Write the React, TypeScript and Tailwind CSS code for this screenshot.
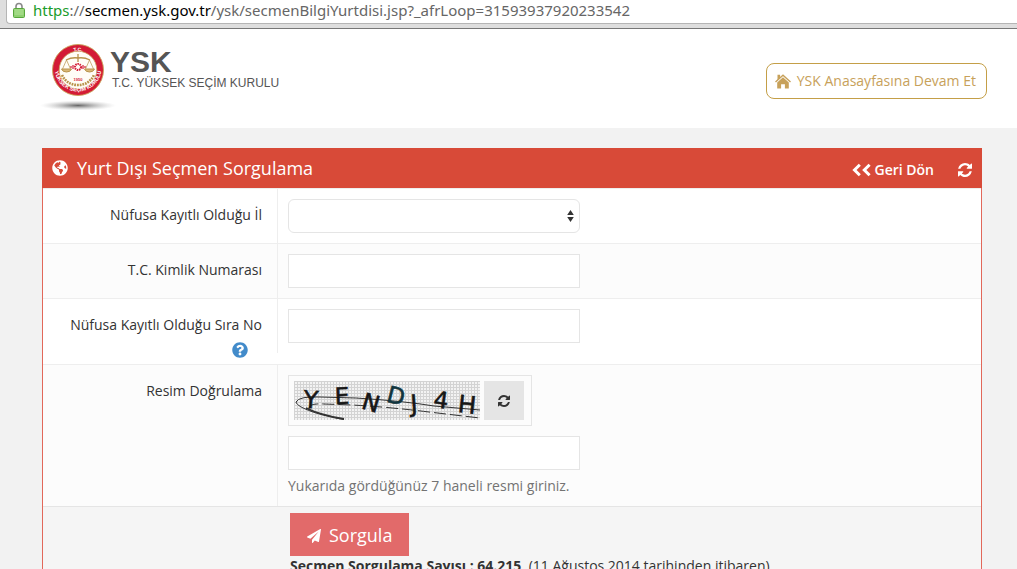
import type { ReactNode } from "react";
import { FaGlobeAmericas, FaQuestionCircle } from "react-icons/fa";

function RefreshIcon({ className }: { className: string }) {
  return (
    <svg viewBox="0 0 1536 1536" fill="currentColor" className={className} aria-hidden="true">
      <path d="M1511 928q0 5-1 7-64 268-268 434.500t-478 166.500q-146 0-282.500-55t-243.500-157l-129 129q-19 19-45 19t-45-19-19-45v-448q0-26 19-45t45-19h448q26 0 45 19t19 45-19 45l-137 137q71 66 161 102t187 36q134 0 250-65t186-179q11-17 53-117 8-23 30-23h192q13 0 22.500 9.500t9.500 22.500zm25-800v448q0 26-19 45t-45 19h-448q-26 0-45-19t-19-45 19-45l138-138q-148-137-349-137-134 0-250 65t-186 179q-11 17-53 117-8 23-30 23h-199q-13 0-22.500-9.500t-9.500-22.500v-7q65-268 270-434.500t480-166.500q146 0 284 55.500t245 156.500l130-129q19-19 45-19t45 19 19 45z" />
    </svg>
  );
}

function PlaneIcon() {
  return (
    <svg viewBox="0 0 1792 1792" fill="currentColor" className="mt-0.5 size-3.5" aria-hidden="true">
      <path d="M1764 11q33 24 27 64l-256 1536q-5 29-32 45-14 8-31 8-11 0-24-5l-453-185-242 295q-18 23-49 23-13 0-22-4-19-7-30.500-23.500t-11.500-36.500v-349l864-1059-1069 925-395-162q-37-14-40-55-2-40 32-59l1664-960q15-9 32-9 20 0 36 11z" />
    </svg>
  );
}

function DoubleChevronIcon() {
  return (
    <svg viewBox="0 0 20 14" className="h-3.5 w-5" fill="none" stroke="currentColor" strokeWidth="3" aria-hidden="true">
      <path d="M8.800 1.800L3.500 7l5.300 5.200M18.600 1.800L13.300 7l5.300 5.200" />
    </svg>
  );
}

function HomeIcon() {
  return (
    <svg viewBox="0 0 16 15" className="h-[15px] w-4" aria-hidden="true">
      <path d="M2.500 0.800h2.600v3l-2.600 2.200z" fill="currentColor" />
      <path d="M0.500 8L8 1.200 15.500 8" fill="none" stroke="currentColor" strokeWidth="1.400" />
      <path d="M8 3.200l5.800 5.200V14.500H9.900V10.200H6.100V14.500H2.200V8.400z" fill="currentColor" />
    </svg>
  );
}

function LockIcon() {
  return (
    <svg viewBox="0 0 12 16" className="h-4 w-3 shrink-0" aria-hidden="true">
      <path d="M3 8V4.500a3 3 0 0 1 6 0V8" fill="none" stroke="#8a8a8a" strokeWidth="1.600" />
      <rect x="0.500" y="6.500" width="11" height="9" rx="1" fill="#8fd070" stroke="#57a63c" />
      <path d="M1.500 8h9M1.500 10h9M1.500 12h9" stroke="#bce8a5" strokeWidth="0.800" />
    </svg>
  );
}

function Emblem() {
  return (
    <svg viewBox="0 0 80 72" className="h-[72px] w-20 shrink-0" aria-hidden="true">
      <defs>
        <radialGradient id="shade">
          <stop offset="0" stopColor="#555" stopOpacity="0.900" />
          <stop offset="0.500" stopColor="#888" stopOpacity="0.450" />
          <stop offset="1" stopColor="#bbb" stopOpacity="0" />
        </radialGradient>
        <path id="lowerArc" d="M16.500 25a23.500 23.500 0 0 0 47 0" />
        <path id="upperArc" d="M20 28a20 20 0 0 1 40 0" />
      </defs>
      <ellipse cx="40" cy="62.500" rx="38" ry="5" fill="url(#shade)" />
      <circle cx="40" cy="27" r="25.500" fill="#d31b35" stroke="#c9a35a" strokeWidth="0.900" />
      <circle cx="40" cy="27" r="18.800" fill="#fffdf6" stroke="#c9a35a" strokeWidth="0.800" />
      <g fill="#fff" fontFamily="Liberation Sans, sans-serif" fontWeight="700">
        <text fontSize="5" textAnchor="middle">
          <textPath href="#upperArc" startOffset="50%">T.C.</textPath>
        </text>
        <text fontSize="5.500" textAnchor="middle">
          <textPath href="#lowerArc" startOffset="50%">YÜKSEK SEÇİM KURULU</textPath>
        </text>
      </g>
      <g fill="none" stroke="#b8924a" strokeWidth="1">
        <path d="M28 17q6-3 12-2q6-1 12 2M40 11v8" strokeWidth="1.300" />
        <path d="M28.500 17l-4 9M28.500 17l4 9M51.500 17l-4 9M51.500 17l4 9" strokeWidth="0.700" />
        <path d="M23.500 26h10q-1 3-5 3t-5-3zM46.500 26h10q-1 3-5 3t-5-3z" fill="#d8b877" />
        <path d="M24 32q5 10 16 10q11 0 16-10" strokeWidth="2.600" strokeDasharray="1.800 0.900" />
      </g>
      <circle cx="40" cy="24" r="3" fill="none" stroke="#d31b35" strokeWidth="2" strokeDasharray="1.500 0.700" />
      <path d="M35 22v4M45 22v4M33 23v2M47 23v2" stroke="#d31b35" strokeWidth="1.200" />
      <text x="40" y="37.500" fontSize="4" fontWeight="700" textAnchor="middle" fill="#d31b35" fontFamily="Liberation Sans, sans-serif">1950</text>
    </svg>
  );
}

const captchaLetters = [
  { char: "Y", x: 17, y: 19, angle: 4, size: 24, color: "#161616" },
  { char: "E", x: 48, y: 15, angle: -2, size: 23, color: "#161616" },
  { char: "N", x: 77, y: 22, angle: 16, size: 23, color: "#161616" },
  { char: "D", x: 102, y: 15, angle: 14, size: 23, color: "#10343d" },
  { char: "J", x: 120, y: 23, angle: -4, size: 24, color: "#161616" },
  { char: "4", x: 147, y: 19, angle: 8, size: 23, color: "#161616" },
  { char: "H", x: 173, y: 24, angle: 6, size: 24, color: "#161616" },
];

function Captcha() {
  return (
    <svg viewBox="0 0 186 39" className="h-[39px] w-[186px]" role="img" aria-label="Resim Doğrulama">
      <defs>
        <pattern id="mesh" width="3" height="3" patternUnits="userSpaceOnUse">
          <rect width="3" height="3" fill="#f3f3f3" />
          <path d="M0.500 0v3M0 0.500h3" stroke="#d3d3d3" />
        </pattern>
      </defs>
      <rect width="186" height="39" fill="url(#mesh)" />
      <g fill="none" stroke="#333">
        <path d="M50 38.500C28 35 3 27 2 21Q5 15 26 16L62 17Q110 20 140 25L186 29" strokeWidth="1" />
        <path d="M15 28Q14 22 30 23L58 24Q95 26 135 31L186 37" strokeWidth="1" strokeDasharray="12 4" />
        <path d="M12 27Q26 34 50 38" strokeWidth="1.800" />
      </g>
      {captchaLetters.map((l) => (
        <text
          key={l.x}
          x={l.x}
          y={l.y}
          transform={`rotate(${l.angle} ${l.x} ${l.y})`}
          fontSize={l.size}
          fill={l.color}
          stroke={l.color}
          strokeWidth="0.600"
          textAnchor="middle"
          dominantBaseline="central"
          fontFamily="DejaVu Sans, sans-serif"
        >
          {l.char}
        </text>
      ))}
    </svg>
  );
}

const inputClass = "block h-[34px] w-[292px] max-w-full border border-[#e5e5e5] bg-white px-3 outline-none";

type RowProps = { id: string; label: string; shaded?: boolean; help?: boolean; children: ReactNode };

function FormRow({ id, label, shaded, help, children }: RowProps) {
  return (
    <div className={`flex items-start border-t border-[#eeeeee] ${shaded ? "bg-[#fcfcfc]" : "bg-white"}`}>
      <div className="w-[234px] shrink-0 pt-4 pr-[15px] text-right">
        <label htmlFor={id} className="block">{label}</label>
        {help && (
          <button type="button" aria-label="Yardım" className="mt-[7px] mr-3.5 mb-1.5 ml-auto block text-[#428bca]">
            <FaQuestionCircle className="size-4" />
          </button>
        )}
      </div>
      <div className="min-w-0 flex-1 border-l border-[#eeeeee] p-2.5">{children}</div>
    </div>
  );
}

export default function App() {
  return (
    <div className="flex h-screen flex-col overflow-hidden bg-[#f2f2f2] font-['Open_Sans',sans-serif] text-sm leading-5 text-[#333333]">
      <div className="shrink-0 border-b border-[#777777] bg-[#dedede] pb-1 pl-1.5">
        <div className="flex h-6 items-center gap-2 rounded-bl border-b border-l border-[#b5b5b5] bg-white pb-1 pl-1.5">
          <LockIcon />
          <span className="font-['Noto_Sans',sans-serif] text-[15px] leading-5 whitespace-nowrap text-[#666666]">
            <span className="text-[#1a9c2a]">https</span>://<span className="text-black">secmen.ysk.gov.tr</span>
            /ysk/secmenBilgiYurtdisi.jsp?_afrLoop=31593937920233542
          </span>
        </div>
      </div>

      <header className="flex h-[99px] shrink-0 items-start justify-between bg-white pr-[30px] pl-[38px]">
        <div className="flex pt-3.5 font-['Liberation_Sans',sans-serif] text-[#555555]">
          <Emblem />
          <div className="-ml-2 pt-1">
            <div className="text-3xl leading-[30px] font-bold">YSK</div>
            <div className="pl-0.5 text-xs leading-3 whitespace-nowrap">T.C. YÜKSEK SEÇİM KURULU</div>
          </div>
        </div>
        <a href="#anasayfa" className="mt-[34px] flex h-9 items-center gap-1.5 rounded-lg border border-[#c49f47] pr-2.5 pl-2 whitespace-nowrap text-[#c7a15a]">
          <HomeIcon />
          YSK Anasayfasına Devam Et
        </a>
      </header>

      <main className="pt-5 pr-[35px] pl-[42px]">
        <form className="border-x border-[#e2685a]" onSubmit={(e) => e.preventDefault()}>
          <div className="-mx-px flex h-10 items-center justify-between bg-[#d84a38] px-2.5 text-white">
            <h1 className="flex items-center gap-[9px] text-lg leading-6 font-medium">
              <FaGlobeAmericas className="size-4" />
              Yurt Dışı Seçmen Sorgulama
            </h1>
            <div className="flex items-center gap-6 pt-1">
              <a href="#geri" className="flex items-center gap-[3px] font-semibold">
                <DoubleChevronIcon />
                Geri Dön
              </a>
              <button type="button" aria-label="Yenile">
                <RefreshIcon className="size-3.5" />
              </button>
            </div>
          </div>

          <FormRow id="il" label="Nüfusa Kayıtlı Olduğu İl">
            <div className="relative w-[292px] max-w-full">
              <select id="il" className="block h-[34px] w-full appearance-none rounded-md border border-[#e5e5e5] bg-white px-3 outline-none">
                <option value=""></option>
              </select>
              <svg viewBox="0 0 7 12" className="pointer-events-none absolute top-[11px] right-1.5 h-3 w-[7px]" fill="#333" aria-hidden="true">
                <path d="M3.500 0L6.800 5H0.200zM3.500 12L6.800 7H0.200z" />
              </svg>
            </div>
          </FormRow>
          <FormRow id="kimlik" label="T.C. Kimlik Numarası" shaded>
            <input id="kimlik" type="text" className={inputClass} />
          </FormRow>
          <FormRow id="sira" label="Nüfusa Kayıtlı Olduğu Sıra No" help>
            <input id="sira" type="text" className={inputClass} />
          </FormRow>
          <FormRow id="resim" label="Resim Doğrulama" shaded>
            <div className="flex w-fit gap-1 border border-[#e5e5e5] py-[5px] pr-[7px] pl-[5px]">
              <Captcha />
              <button type="button" aria-label="Resmi yenile" className="flex w-10 items-center justify-center bg-[#e5e5e5]">
                <RefreshIcon className="size-3" />
              </button>
            </div>
            <input id="resim" type="text" className={`mt-2.5 ${inputClass}`} />
            <p className="mt-1.5 text-[#737373]">Yukarıda gördüğünüz 7 haneli resmi giriniz.</p>
          </FormRow>

          <div className="flex border-t border-[#e5e5e5] bg-[#f5f5f5]">
            <div className="w-[234px] shrink-0" />
            <div className="min-w-0 flex-1 pt-1.5 pb-5 pl-[13px]">
              <button type="submit" className="flex h-[43px] items-center gap-2 bg-[#e26a6a] px-[17px] text-lg leading-6 font-medium text-white">
                <PlaneIcon />
                Sorgula
              </button>
              <p className="whitespace-nowrap">
                <b>Seçmen Sorgulama Sayısı : 64.215</b>&nbsp; (11 Ağustos 2014 tarihinden itibaren)
              </p>
            </div>
          </div>
        </form>
      </main>
    </div>
  );
}
